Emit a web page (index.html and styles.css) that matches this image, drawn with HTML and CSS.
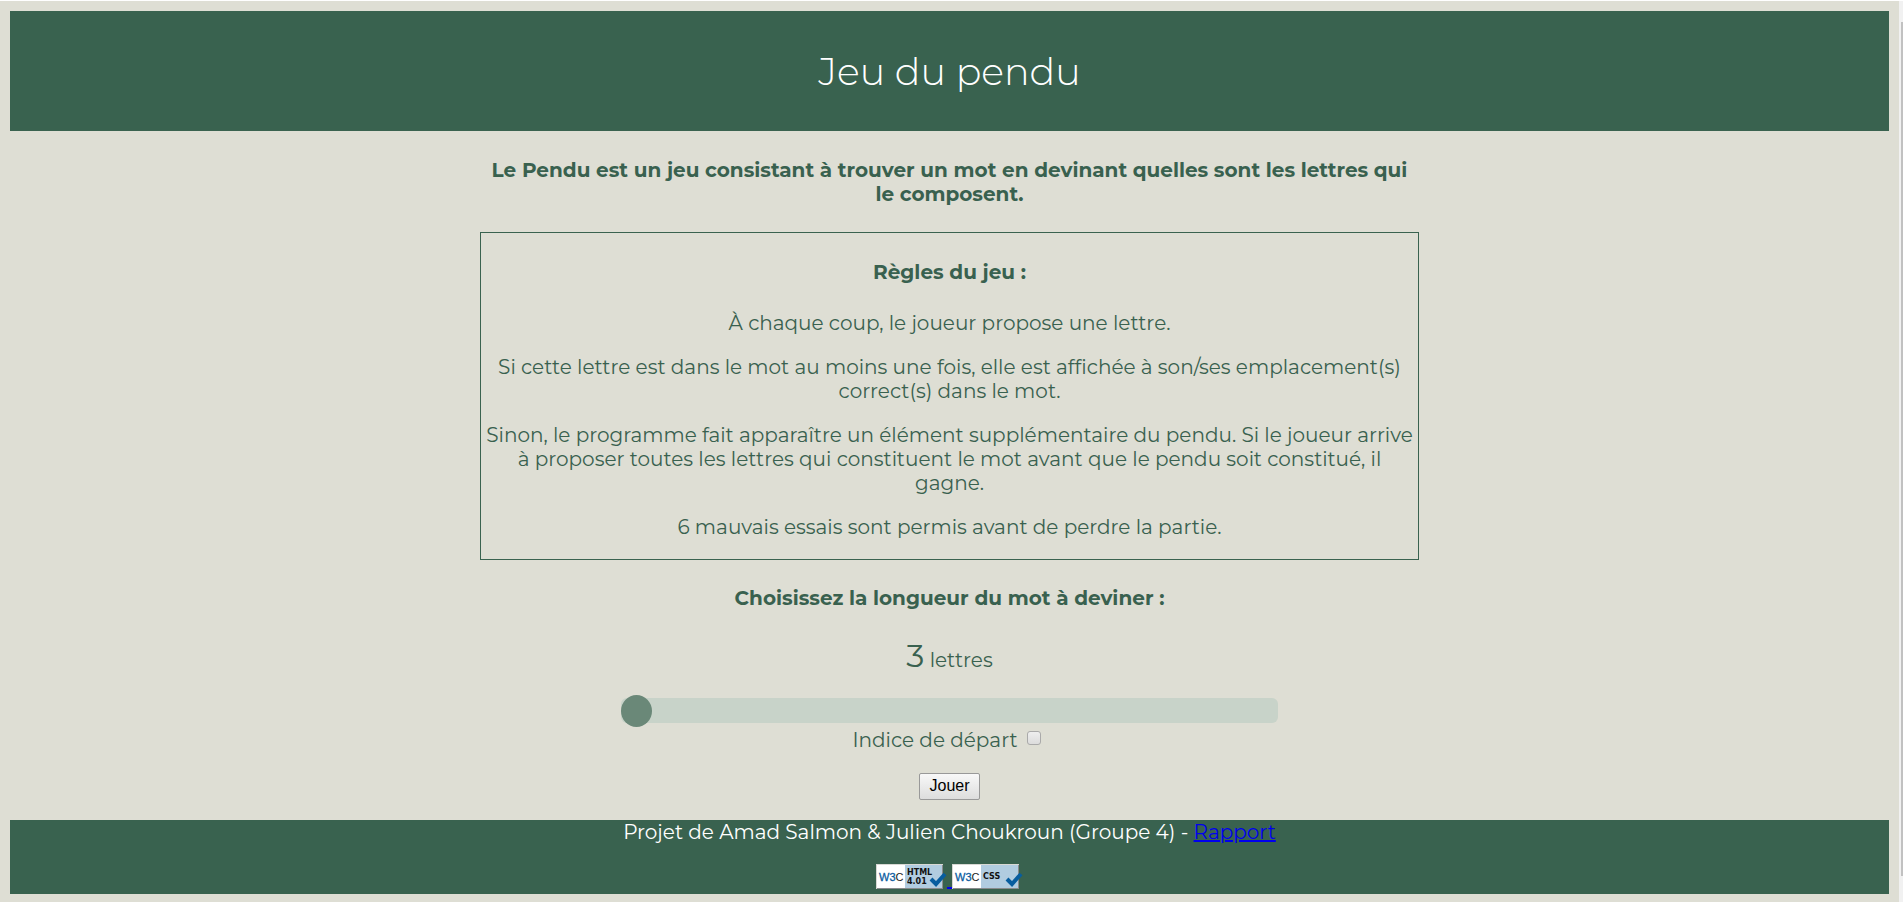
FILE: index.html
```html
<!DOCTYPE html>
<html lang="fr">
<head>
<meta charset="utf-8">
<title>Jeu du pendu</title>
<link rel="stylesheet" href="styles.css">
</head>
<body>
<div class="page">
  <header class="banner"><h1 class="title">Jeu du pendu</h1></header>
  <main class="content">
    <h2 class="heading intro">Le Pendu est un jeu consistant à trouver un mot en devinant quelles sont les lettres qui<br>le composent.</h2>
    <section class="rules">
      <h2 class="heading rules-title">Règles du jeu :</h2>
      <p>À chaque coup, le joueur propose une lettre.</p>
      <p>Si cette lettre est dans le mot au moins une fois, elle est affichée à son/ses emplacement(s)<br>correct(s) dans le mot.</p>
      <p>Sinon, le programme fait apparaître un élément supplémentaire du pendu. Si le joueur arrive<br>à proposer toutes les lettres qui constituent le mot avant que le pendu soit constitué, il<br>gagne.</p>
      <p>6 mauvais essais sont permis avant de perdre la partie.</p>
    </section>
    <form class="options">
      <h2 class="heading"><label for="length">Choisissez la longueur du mot à deviner :</label></h2>
      <p class="count"><output class="number" for="length">3</output> lettres</p>
      <input class="slider" type="range" id="length" min="3" max="10" value="3">
      <div class="hint"><label for="hint">Indice de départ</label><input class="check" type="checkbox" id="hint"></div>
      <button class="play" type="button">Jouer</button>
    </form>
  </main>
  <footer class="footer">
    <p class="credits">Projet de Amad Salmon &amp; Julien Choukroun (Groupe 4) - <a class="link" href="#">Rapport</a></p>
    <div class="badges">
      <a class="badge" href="#" aria-label="W3C HTML 4.01">
        <svg width="71" height="25" viewBox="0 0 71 25">
          <path fill="#d8d8d4" d="M0 0h67v25H0z"/><path fill="#898b8d" d="M66 1h1v24H1v-1h65z"/>
          <path fill="#fff" d="M1 1h28v23H1z"/><path fill="#b1cce0" d="M29 1h37v23H29z"/>
          <text class="w3c" x="3" y="17">W3<tspan class="w3c-dark">C</tspan></text>
          <text class="badge-text" x="31" y="11">HTML</text><text class="badge-text" x="31" y="20">4.01</text>
          <path fill="none" stroke="#075d9f" stroke-width="4" d="M55 15l5 5 9-10"/>
        </svg>
      </a>
      <span class="badge-gap" aria-hidden="true"></span>
      <a class="badge" href="#" aria-label="W3C CSS">
        <svg width="71" height="25" viewBox="0 0 71 25">
          <path fill="#d8d8d4" d="M0 0h67v25H0z"/><path fill="#898b8d" d="M66 1h1v24H1v-1h65z"/>
          <path fill="#fff" d="M1 1h28v23H1z"/><path fill="#b1cce0" d="M29 1h37v23H29z"/>
          <text class="w3c" x="3" y="17">W3<tspan class="w3c-dark">C</tspan></text>
          <text class="badge-text" x="31" y="15">CSS</text>
          <path fill="none" stroke="#075d9f" stroke-width="4" d="M55 15l5 5 9-10"/>
        </svg>
      </a>
    </div>
  </footer>
</div>
<div class="scrollbar" aria-hidden="true"><div class="scroll-thumb"></div></div>
</body>
</html>
```
FILE: styles.css
```css
* { box-sizing: border-box; }
body {
  display: flex;
  min-height: 100vh;
  margin: 0;
  border-top: 1px solid #fff;
  background: #deded4;
  color: #39614f;
  font: 400 20px/24px Montserrat, Inter, sans-serif;
  text-align: center;
}
.page { flex: 1; padding: 10px; }
.banner { padding: 37px 0 35px; background: #39624f; color: #fff; }
.title { margin: 0; font-size: 38px; line-height: 48px; font-weight: 300; }
.content { width: 50%; margin: 0 auto; white-space: nowrap; }
.heading { margin: 0; padding: 26px 0 27px; font-size: 20px; line-height: 24px; font-weight: 700; }
.intro { padding: 27px 0 26px; }
.rules { padding-bottom: 20px; border: 1px solid #39624f; }
.rules-title { padding: 27px 0; }
.rules p { margin: 0 0 20px; }
.rules p:last-child { margin: 0; }
.options { display: flex; flex-direction: column; align-items: center; }
.count { margin: 0 0 15px; line-height: 38px; }
.number { font-size: 32px; }
.slider {
  width: 70%;
  height: 25px;
  margin: 4px 0 5px;
  border-radius: 6px;
  background: #c8d3c9;
  appearance: none;
}
.slider::-webkit-slider-thumb {
  width: 31px;
  height: 32px;
  border-radius: 50%;
  background: #6a8878;
  appearance: none;
}
.hint { display: flex; align-items: center; gap: 9px; }
.check {
  width: 14px;
  height: 14px;
  margin: 0 6px 4px 0;
  border: 1px solid #aaa;
  border-radius: 3px;
  background: linear-gradient(#eee, #dcdcdc);
  appearance: none;
}
.play {
  margin: 21px 0 20px;
  padding: 0 9px 1px;
  border: 1px solid #999;
  border-radius: 2px;
  background: linear-gradient(#f8f8f8, #ddd);
  color: #000;
  font: 16px/24px "Liberation Sans", Arial, sans-serif;
}
.footer { padding-bottom: 5px; background: #39624f; color: #fff; }
.credits { margin: 0 0 20px; }
.link { color: #00e; }
.badges { display: flex; justify-content: center; }
.badge { display: flex; }
.badge-gap { width: 5px; height: 2px; align-self: flex-end; background: #00e; }
.badge-text { font: bold 8px "DejaVu Sans", sans-serif; fill: #111; }
.w3c { font: 11px "Liberation Sans", sans-serif; fill: #0a5c9f; stroke: #0a5c9f; stroke-width: 0.3px; }
.w3c-dark { fill: #222; stroke: none; }
.scrollbar { width: 4px; padding: 21px 0 28px 2px; background: #f1f1f1; display: flex; }
.scroll-thumb { flex: 1; background: #c1c1c1; }
```
